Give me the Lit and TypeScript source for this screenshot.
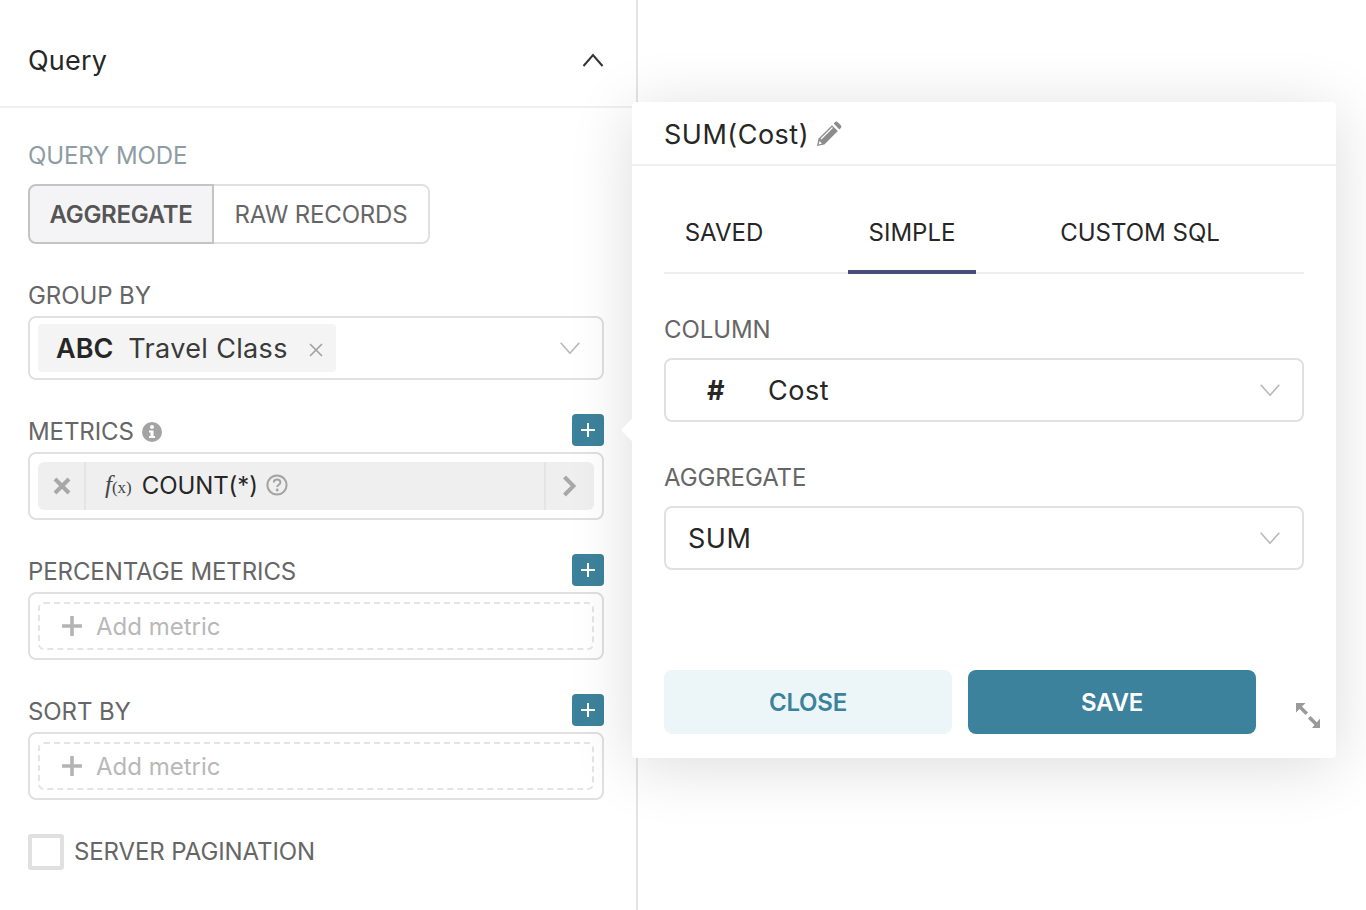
import { LitElement, html, css, svg } from "lit";
import { customElement } from "lit/decorators.js";

const chevronDown = html`<svg class="chev" width="20" height="12" viewBox="0 0 20 12"><path d="M.7.7L10 11.2 19.3.7" fill="none" stroke="#b8b8b8" stroke-width="1.6"/></svg>`;
const plus = svg`<path d="M8 1v14M1 8h14" stroke="#fff" stroke-width="2"/>`;

@customElement("app-root")
export class AppRoot extends LitElement {
  static styles = css`
    :host {
      display: block;
      position: relative;
      width: 1366px;
      height: 910px;
      overflow: hidden;
      background: #fff;
      font-family: Inter, "Noto Sans", sans-serif;
      color: #262626;
    }
    .panel {
      width: 638px;
      height: 910px;
      box-sizing: border-box;
      border-right: 2px solid #e4e4e4;
    }
    .panel-head {
      height: 106px;
      box-sizing: border-box;
      padding: 14px 32px 0 28px;
      display: flex;
      align-items: center;
      justify-content: space-between;
      font-size: 27px;
      letter-spacing: 0.2px;
    }
    .rule {
      height: 2px;
      background: #f0f0f0;
    }
    .panel-body {
      padding: 0 32px 0 28px;
      width: 576px;
    }
    .label {
      font-size: 24px;
      line-height: 28px;
      letter-spacing: -0.1px;
      color: #666;
      display: flex;
      align-items: center;
      gap: 8px;
    }
    .label.muted {
      color: #8e9ca3;
    }
    .mode {
      margin-top: 34px;
    }
    .toggle {
      display: flex;
      margin-top: 14px;
      width: 402px;
      height: 60px;
      box-sizing: border-box;
      font-size: 24px;
      color: #666;
    }
    .toggle div {
      display: flex;
      align-items: center;
      justify-content: center;
      box-sizing: border-box;
    }
    .toggle .on {
      width: 186px;
      background: #f4f4f6;
      border: 2px solid #c4c4c4;
      border-radius: 8px 0 0 8px;
      font-weight: 600;
      letter-spacing: -0.3px;
      color: #555;
    }
    .toggle .off {
      flex: 1;
      border: 2px solid #e0e0e0;
      border-left: none;
      border-radius: 0 8px 8px 0;
      letter-spacing: -0.2px;
    }
    .group {
      margin-top: 38px;
    }
    .box {
      box-sizing: border-box;
      border: 2px solid #e0e0e0;
      border-radius: 8px;
      display: flex;
      align-items: center;
    }
    .group-box {
      height: 64px;
      margin-top: 6px;
      padding: 0 22px 0 8px;
      justify-content: space-between;
    }
    .chip {
      display: flex;
      align-items: center;
      width: 298px;
      height: 48px;
      box-sizing: border-box;
      padding-left: 18px;
      background: #f4f4f4;
      border-radius: 4px;
      font-size: 27px;
      letter-spacing: 0.35px;
      color: #3a3a3a;
    }
    .chip b {
      font-weight: 600;
      color: #262626;
      margin-right: 15px;
      letter-spacing: 0;
    }
    .chip svg {
      margin-left: 21px;
      margin-top: 4px;
    }
    .row-head {
      display: flex;
      justify-content: space-between;
      align-items: center;
      height: 32px;
    }
    .row-head .label {
      padding-top: 3px;
    }
    .add {
      width: 32px;
      height: 32px;
      border-radius: 4px;
      background: #3d829c;
      display: flex;
      align-items: center;
      justify-content: center;
    }
    .metrics {
      margin-top: 34px;
    }
    .metric-box {
      height: 68px;
      margin-top: 6px;
      padding: 0 8px;
    }
    .metric {
      flex: 1;
      height: 48px;
      display: flex;
      align-items: stretch;
      background: #efefef;
      border-radius: 6px;
    }
    .metric .x {
      width: 48px;
      box-sizing: border-box;
      padding-left: 2px;
      border-right: 2px solid #e4e4e4;
      display: flex;
      align-items: center;
      justify-content: center;
    }
    .metric .name {
      flex: 1;
      display: flex;
      align-items: center;
      padding: 0 0 2px 19px;
      font-size: 24px;
      letter-spacing: -0.1px;
    }
    .fx {
      font-family: "Liberation Serif", serif;
      color: #444;
      margin-right: 10px;
      letter-spacing: 0;
    }
    .fx i {
      font-size: 25px;
    }
    .fx span {
      font-size: 17px;
    }
    .metric .name svg {
      margin-left: 8px;
    }
    .metric .go {
      width: 50px;
      box-sizing: border-box;
      padding-right: 2px;
      border-left: 2px solid #e4e4e4;
      display: flex;
      align-items: center;
      justify-content: center;
    }
    .pct {
      margin-top: 34px;
    }
    .empty {
      flex: 1;
      height: 48px;
      box-sizing: border-box;
      border: 2px dashed #e4e4e4;
      border-radius: 6px;
      display: flex;
      align-items: center;
      padding-left: 22px;
      gap: 14px;
      font-size: 24px;
      color: #b8b8b8;
    }
    .check {
      margin-top: 34px;
      display: flex;
      align-items: center;
      gap: 10px;
    }
    .check i {
      display: block;
      width: 36px;
      height: 36px;
      box-sizing: border-box;
      border: 4px solid #e0e0e0;
      border-radius: 3px;
    }
    .pop {
      position: absolute;
      left: 632px;
      top: 102px;
      width: 704px;
      height: 656px;
      box-sizing: border-box;
      background: #fff;
      border-radius: 4px;
      box-shadow: 0 8px 64px rgba(0, 0, 0, 0.14);
      padding: 0 32px;
    }
    .pop::before {
      content: "";
      position: absolute;
      left: -7px;
      top: 318px;
      width: 20px;
      height: 20px;
      background: #fff;
      transform: rotate(45deg);
      border-radius: 2px;
    }
    .pop-title {
      height: 64px;
      box-sizing: border-box;
      margin: 0 -32px;
      padding: 2px 32px 0;
      border-bottom: 2px solid #f0f0f0;
      display: flex;
      align-items: center;
      gap: 7px;
      font-size: 27px;
      letter-spacing: 0.5px;
    }
    .tabs {
      display: flex;
      height: 108px;
      box-sizing: border-box;
      border-bottom: 2px solid #f0f0f0;
      font-size: 24px;
    }
    .tab {
      height: 108px;
      box-sizing: border-box;
      padding-top: 24px;
      display: flex;
      align-items: center;
      justify-content: center;
    }
    .tab.saved {
      width: 120px;
      margin-right: 64px;
    }
    .tab.simple {
      width: 128px;
      padding-top: 28px;
      border-bottom: 4px solid #484d7c;
    }
    .tab.custom {
      width: 328px;
    }
    .column {
      margin-top: 42px;
    }
    .select {
      height: 64px;
      margin-top: 14px;
      padding: 0 22px;
      justify-content: space-between;
      font-size: 27px;
      letter-spacing: 0.5px;
    }
    .select .type {
      display: flex;
      align-items: center;
    }
    .select .type b {
      width: 56px;
      text-align: center;
      font-weight: 700;
      margin-right: 24px;
    }
    .aggregate {
      margin-top: 42px;
    }
    .actions {
      display: flex;
      gap: 16px;
      margin-top: 100px;
      align-items: flex-start;
    }
    .btn {
      width: 288px;
      height: 64px;
      border-radius: 8px;
      display: flex;
      align-items: center;
      justify-content: center;
      font-size: 24px;
      font-weight: 600;
      letter-spacing: -0.2px;
    }
    .btn.close {
      background: #ecf5f7;
      color: #3d829c;
    }
    .btn.save {
      background: #3d829c;
      color: #fff;
    }
    .resize {
      position: absolute;
      left: 664px;
      top: 601px;
    }
  `;

  private addButton() {
    return html`<div class="add"><svg width="16" height="16" viewBox="0 0 16 16">${plus}</svg></div>`;
  }

  private emptyBox() {
    return html`<div class="box metric-box">
      <div class="empty">
        <svg width="20" height="20" viewBox="0 0 20 20"><path d="M10 0v20M0 10h20" stroke="#b4b4b4" stroke-width="3.6"/></svg>
        Add metric
      </div>
    </div>`;
  }

  render() {
    return html`
      <div class="panel">
        <div class="panel-head">
          Query
          <svg width="22" height="14" viewBox="0 0 22 14"><path d="M1.5 13L11 2l9.5 11" fill="none" stroke="#333" stroke-width="2"/></svg>
        </div>
        <div class="rule"></div>
        <div class="panel-body">
          <div class="label muted mode">QUERY MODE</div>
          <div class="toggle">
            <div class="on">AGGREGATE</div>
            <div class="off">RAW RECORDS</div>
          </div>

          <div class="label group">GROUP BY</div>
          <div class="box group-box">
            <div class="chip">
              <b>ABC</b>Travel Class
              <svg width="14" height="14" viewBox="0 0 14 14"><path d="M1 1l12 12M13 1L1 13" stroke="#a0a0a0" stroke-width="1.6"/></svg>
            </div>
            ${chevronDown}
          </div>

          <div class="row-head metrics">
            <div class="label">
              METRICS
              <svg width="20" height="20" viewBox="0 0 20 20">
                <circle cx="10" cy="10" r="10" fill="#a3a3a3"/>
                <circle cx="10" cy="5" r="2" fill="#fff"/>
                <path d="M7 8.5h4.5V14H13v2H7v-2h1.5v-3.5H7z" fill="#fff"/>
              </svg>
            </div>
            ${this.addButton()}
          </div>
          <div class="box metric-box">
            <div class="metric">
              <div class="x">
                <svg width="18" height="18" viewBox="0 0 18 18"><path d="M2 2l14 14M16 2L2 16" stroke="#a8a8a8" stroke-width="4"/></svg>
              </div>
              <div class="name">
                <span class="fx"><i>f</i><span>(x)</span></span>COUNT(*)
                <svg width="22" height="22" viewBox="0 0 22 22">
                  <circle cx="11" cy="11" r="9.6" fill="none" stroke="#a3a3a3" stroke-width="2"/>
                  <path d="M7.8 8.6c0-4.2 6.6-4.2 6.6-.2 0 2.4-3.2 2.4-3.2 4.6" fill="none" stroke="#a3a3a3" stroke-width="2"/>
                  <circle cx="11.2" cy="16" r="1.4" fill="#a3a3a3"/>
                </svg>
              </div>
              <div class="go">
                <svg width="14" height="22" viewBox="0 0 14 22"><path d="M2.5 2l9 9-9 9" fill="none" stroke="#a8a8a8" stroke-width="4"/></svg>
              </div>
            </div>
          </div>

          <div class="row-head pct">
            <div class="label">PERCENTAGE METRICS</div>
            ${this.addButton()}
          </div>
          ${this.emptyBox()}

          <div class="row-head pct">
            <div class="label">SORT BY</div>
            ${this.addButton()}
          </div>
          ${this.emptyBox()}

          <div class="check">
            <i></i>
            <div class="label">SERVER PAGINATION</div>
          </div>
        </div>
      </div>

      <div class="pop">
        <div class="pop-title">
          SUM(Cost)
          <svg width="26" height="26" viewBox="0 0 26 26">
            <path d="M1 25l1.6-7.4L16 4.2l5.8 5.8L8.4 23.4z" fill="#8c8c8c"/>
            <path d="M17.6 2.6l1.4-1.4c.8-.8 2-.8 2.8 0l3 3c.8.8.8 2 0 2.8l-1.4 1.4z" fill="#8c8c8c"/>
            <path d="M5 18L16.5 6.5" stroke="#fff" stroke-width="1.2"/>
            <path d="M3.6 20l2.4 2.4-3.4 1z" fill="#fff"/>
          </svg>
        </div>
        <div class="tabs">
          <div class="tab saved">SAVED</div>
          <div class="tab simple">SIMPLE</div>
          <div class="tab custom">CUSTOM SQL</div>
        </div>

        <div class="label column">COLUMN</div>
        <div class="box select">
          <div class="type"><b>#</b>Cost</div>
          ${chevronDown}
        </div>

        <div class="label aggregate">AGGREGATE</div>
        <div class="box select">
          <div class="type">SUM</div>
          ${chevronDown}
        </div>

        <div class="actions">
          <div class="btn close">CLOSE</div>
          <div class="btn save">SAVE</div>
        </div>

        <svg class="resize" width="24" height="25" viewBox="0 0 24 25">
          <path d="M0 0h9.5L0 9.5zM16 25l8-9.5V25z" fill="#9a9a9a"/>
          <path d="M4 4l6.8 6.8M20 21l-6.8-6.8" stroke="#9a9a9a" stroke-width="3.6"/>
        </svg>
      </div>
    `;
  }
}
